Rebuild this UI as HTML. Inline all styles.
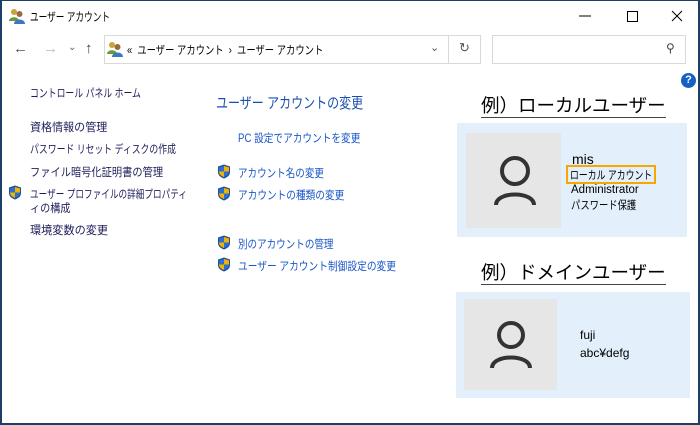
<!DOCTYPE html>
<html><head><meta charset="utf-8"><style>
*{margin:0;padding:0;box-sizing:border-box}
body{width:700px;height:425px;overflow:hidden;background:#fff;font-family:"Liberation Sans","Noto Sans CJK JP",sans-serif;position:relative}
.a{position:absolute;white-space:nowrap;transform-origin:0 50%}
.win{position:absolute;left:0;top:0;width:700px;height:425px;border:2px solid #1d3f66;border-top:1px solid #1d3f66}
.l{font-size:11.5px;color:#1e1e5a}
.m{font-size:11.5px;color:#1a56c8}
.sh{position:absolute;width:14px;height:15px}
</style></head><body>
<div class="win"></div>
<svg class="a" style="left:9px;top:8px" width="16" height="16" viewBox="0 0 16 16"><circle cx="5" cy="4" r="3" fill="#c9a23a"/><path d="M0 13c0-5 10-5 10 0z" fill="#6c9a3a"/><circle cx="10.5" cy="6" r="3" fill="#9a6a3a"/><path d="M5 16c0-6 11-6 11 0z" fill="#3a7ac0"/></svg>
<div class="a" style="left:30px;top:8px;font-size:12px;color:#000;transform:scaleX(0.72)">ユーザー アカウント</div>
<svg class="a" style="left:575px;top:8px" width="110" height="16"><path d="M4 8H16" stroke="#000" stroke-width="1"/><rect x="52.5" y="3.5" width="10" height="10" fill="none" stroke="#000"/><path d="M97 3L107 13M107 3L97 13" stroke="#000" stroke-width="1"/></svg>
<div class="a" style="left:13px;top:40px;font-size:15px;color:#555">←</div>
<div class="a" style="left:43px;top:40px;font-size:15px;color:#bbb">→</div>
<div class="a" style="left:68px;top:42px;font-size:10px;color:#666">⌄</div>
<div class="a" style="left:85px;top:40px;font-size:15px;color:#444">↑</div>
<div class="a" style="left:104px;top:35px;width:377px;height:29px;border:1px solid #d9d9d9"></div>
<div class="a" style="left:448px;top:35px;width:1px;height:29px;background:#d9d9d9"></div>
<svg class="a" style="left:107px;top:41px" width="16" height="16" viewBox="0 0 16 16"><circle cx="5" cy="4" r="3" fill="#c9a23a"/><path d="M0 13c0-5 10-5 10 0z" fill="#6c9a3a"/><circle cx="10.5" cy="6" r="3" fill="#9a6a3a"/><path d="M5 16c0-6 11-6 11 0z" fill="#3a7ac0"/></svg>
<div class="a" style="left:127px;top:42px;font-size:11.5px;color:#000;transform:scaleX(0.81)">«&nbsp;&nbsp;ユーザー アカウント&nbsp;&nbsp;›&nbsp;&nbsp;ユーザー アカウント</div>
<div class="a" style="left:430px;top:41px;font-size:11px;color:#555">⌄</div>
<div class="a" style="left:459px;top:40px;font-size:13px;color:#555">↻</div>
<div class="a" style="left:492px;top:35px;width:194px;height:29px;border:1px solid #d9d9d9"></div>
<div class="a" style="left:666px;top:41px;font-size:12px;color:#444">⚲</div>
<div class="a" style="left:681px;top:73px;width:15px;height:15px;border-radius:50%;background:#1560c0;color:#fff;font-size:11px;font-weight:bold;text-align:center;line-height:15px">?</div>

<div class="a l" style="left:30px;top:85px;transform:scaleX(0.77)">コントロール パネル ホーム</div>
<div class="a l" style="left:30px;top:119px;transform:scaleX(0.96)">資格情報の管理</div>
<div class="a l" style="left:30px;top:141px;transform:scaleX(0.77)">パスワード リセット ディスクの作成</div>
<div class="a l" style="left:30px;top:164px;transform:scaleX(0.89)">ファイル暗号化証明書の管理</div>
<div class="a l" style="left:30px;top:186px;transform:scaleX(0.75)">ユーザー プロファイルの詳細プロパティ</div>
<div class="a l" style="left:30px;top:200px;transform:scaleX(0.88)">ィの構成</div>
<div class="a l" style="left:30px;top:222px;transform:scaleX(0.97)">環境変数の変更</div>

<div class="a" style="left:216px;top:92px;font-size:15px;color:#1a4fb0;transform:scaleX(0.8)">ユーザー アカウントの変更</div>
<div class="a m" style="left:238px;top:130px;transform:scaleX(0.84)">PC 設定でアカウントを変更</div>
<div class="a m" style="left:238px;top:165px;transform:scaleX(0.83)">アカウント名の変更</div>
<div class="a m" style="left:238px;top:187px;transform:scaleX(0.84)">アカウントの種類の変更</div>
<div class="a m" style="left:238px;top:236px;transform:scaleX(0.83)">別のアカウントの管理</div>
<div class="a m" style="left:238px;top:258px;transform:scaleX(0.845)">ユーザー アカウント制御設定の変更</div>

<svg width="0" height="0" style="position:absolute"><defs><g id="s"><path d="M7 0.5L13 2.5V8C13 11.5 10 13.5 7 14.5C4 13.5 1 11.5 1 8V2.5Z" fill="#1f4f9a"/><path d="M7 2L7 7.5H12V3.4L7 2Z" fill="#f0b400"/><path d="M2 7.5H7V13C4.5 12 2 10.5 2 7.5Z" fill="#f0b400"/><path d="M7 7.5H12C12 10.5 9.5 12 7 13Z" fill="#2c6fd0"/><path d="M2 3.4L7 2V7.5H2Z" fill="#2c6fd0"/></g></defs></svg>
<svg class="sh" style="left:8px;top:185px"><use href="#s"/></svg>
<svg class="sh" style="left:217px;top:164px"><use href="#s"/></svg>
<svg class="sh" style="left:217px;top:186px"><use href="#s"/></svg>
<svg class="sh" style="left:217px;top:235px"><use href="#s"/></svg>
<svg class="sh" style="left:217px;top:257px"><use href="#s"/></svg>

<div class="a" style="left:481px;top:95px;font-size:18.5px;color:#000;border-bottom:1.5px solid #444;line-height:22px">例）ローカルユーザー</div>
<div class="a" style="left:457px;top:123px;width:230px;height:114px;background:#e3f0fc"></div>
<div class="a" style="left:466px;top:133px;width:95px;height:95px;background:#e6e6e6"></div>
<svg class="a" style="left:493px;top:155px" width="44" height="52" viewBox="0 0 44 52"><circle cx="22" cy="16" r="13" fill="none" stroke="#333" stroke-width="4"/><path d="M3 50C3 36 41 36 41 50" fill="none" stroke="#333" stroke-width="4"/></svg>
<div class="a" style="left:572px;top:151px;font-size:14px;color:#000">mis</div>
<div class="a" style="left:566px;top:165px;width:90px;height:19px;border:2px solid #f6a800"></div>
<div class="a" style="left:570px;top:167px;font-size:11.5px;color:#000;transform:scaleX(0.77)">ローカル アカウント</div>
<div class="a" style="left:571px;top:184px;font-size:11.5px;color:#000">Administrator</div>
<div class="a" style="left:571px;top:197px;font-size:11.5px;color:#000;transform:scaleX(0.81)">パスワード保護</div>

<div class="a" style="left:481px;top:262px;font-size:18.5px;color:#000;border-bottom:1.5px solid #444;line-height:22px">例）ドメインユーザー</div>
<div class="a" style="left:456px;top:292px;width:234px;height:106px;background:#e3f0fc"></div>
<div class="a" style="left:464px;top:299px;width:93px;height:91px;background:#e6e6e6"></div>
<svg class="a" style="left:489px;top:320px" width="44" height="50" viewBox="0 0 44 50"><circle cx="22" cy="15" r="12" fill="none" stroke="#333" stroke-width="4"/><path d="M3 48C3 34 41 34 41 48" fill="none" stroke="#333" stroke-width="4"/></svg>
<div class="a" style="left:580px;top:328px;font-size:12px;color:#000">fuji</div>
<div class="a" style="left:580px;top:346px;font-size:12px;color:#000">abc¥defg</div>
</body></html>
